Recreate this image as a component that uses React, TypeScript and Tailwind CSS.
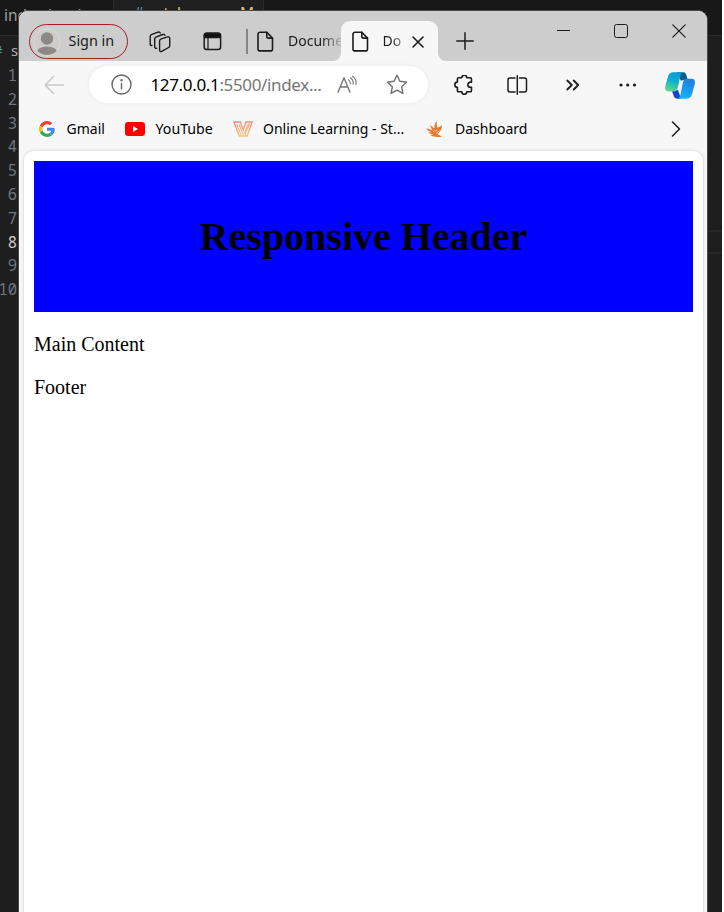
import React from "react";

const ui = "font-['Noto_Sans','Open_Sans',sans-serif] whitespace-nowrap";

type IconProps = { w: number; h: number; className?: string; stroke?: string; sw?: number; children: React.ReactNode };

function Icon({ w, h, className = "", stroke = "#1b1b1b", sw = 1.5, children }: IconProps) {
  return (
    <svg
      width={w}
      height={h}
      viewBox={`0 0 ${w} ${h}`}
      className={`block shrink-0 ${className}`}
      fill="none"
      stroke={stroke}
      strokeWidth={sw}
      strokeLinecap="round"
      strokeLinejoin="round"
    >
      {children}
    </svg>
  );
}

function PageIcon({ className = "" }: { className?: string }) {
  return (
    <Icon w={17} h={21} className={className} sw={1.6}>
      <path d="M3 1.2h6.8l5.7 5.9v10.8a2 2 0 0 1-2 2H3a2 2 0 0 1-2-2V3.2a2 2 0 0 1 2-2Z" />
      <path d="M9.8 1.4v4.1a1.6 1.6 0 0 0 1.6 1.6h4" />
    </Icon>
  );
}

function Editor() {
  const lines = ["1", "2", "3", "4", "5", "6", "7", "8", "9", "10"];
  return (
    <div className="h-full w-[722px] overflow-hidden bg-[#1e1e1e]">
      <div className={`flex h-[36px] border-b border-[#2b2b2b] bg-[#181818] text-[15.5px] leading-[30px] ${ui}`}>
        <div className="w-[114px] shrink-0 border-r border-[#2b2b2b] pl-[4px] text-[#9d9d9d]">index.html</div>
        <div className="flex w-[150px] shrink-0 border-r border-[#2b2b2b] bg-[#1f1f1f] pl-5 leading-[26px] text-[#e2c08d]">
          <span className="w-[22px] text-[#519aba]">#</span>
          <span className="w-[84px]">style.css</span>
          <span>M</span>
        </div>
      </div>
      <div className={`flex h-[28px] items-center text-[15px] text-[#a9a9a9] ${ui}`}>
        <span className="-ml-[7px] w-[18px] text-[#519aba]">#</span>
        <span>style.css</span>
      </div>
      <div className="flex justify-between">
        <div className="flex w-[17px] flex-col items-end font-['Noto_Sans_Mono','DejaVu_Sans_Mono',monospace] text-[15.5px] text-[#6e7681]">
          {lines.map((n) => (
            <div key={n} className={n === "8" ? "h-[23.8px] leading-[23.8px] text-[#cccccc]" : "h-[23.8px] leading-[23.8px]"}>
              {n}
            </div>
          ))}
        </div>
        <div className="mt-[166px] h-[24px] w-[14px] border-y-2 border-[#282828]" />
      </div>
    </div>
  );
}

function TitleBar() {
  return (
    <div className="flex h-[50px] shrink-0 items-start bg-[#cdcdcd]">
      <div className="ml-[10px] mt-[13px] flex h-[35px] w-[99px] shrink-0 items-center rounded-full border-[1.5px] border-[#a81c22]">
        <svg width="28" height="28" viewBox="0 0 28 28" className="ml-[3px] shrink-0">
          <defs>
            <clipPath id="avatar">
              <circle cx="14" cy="14" r="13" />
            </clipPath>
          </defs>
          <circle cx="14" cy="14" r="13.2" fill="#cfcdcb" stroke="#dddbd9" />
          <g fill="#8b8886" clipPath="url(#avatar)">
            <circle cx="14" cy="10.5" r="6.2" />
            <ellipse cx="14" cy="25" rx="10.5" ry="6.6" />
          </g>
        </svg>
        <span className={`-mt-px ml-[7.5px] text-[14.4px] text-[#1b1b1b] ${ui}`}>Sign in</span>
      </div>
      <Icon w={22} h={22} className="ml-[21px] mt-[20px]" sw={1.4}>
        <path d="m11.7 8.2 6.8-2.3c1.3-.4 2.2.2 2.2 1.5v7.3c0 .8-.4 1.4-1.1 1.8l-6.9 3.9c-1.1.6-2.1 0-2.1-1.2v-9c0-1 .3-1.7 1.1-2Z" />
        <path d="M7.7 17.3c-1.3.2-2-.5-2-1.6V8c0-1 .4-1.6 1.2-1.9l6.8-2.6c1.1-.4 1.9 0 2.2.9" />
        <path d="M3 14.5c-1.2.1-1.8-.5-1.8-1.6V5.6c0-1 .4-1.6 1.2-1.9L9 1.2c1.1-.4 1.9 0 2.2.9" />
      </Icon>
      <Icon w={19} h={19} className="ml-[32px] mt-[21px]" sw={1.5}>
        <rect x="1.2" y="1.2" width="16.4" height="16.4" rx="2.5" />
        <path d="M1.5 3.2A2 2 0 0 1 3.5 1.3h11.8a2 2 0 0 1 2 1.9v2.3H1.5Z" fill="#111" />
        <path d="M5 6v11.4" strokeWidth="1.2" />
      </Icon>
      <div className="ml-[24px] mt-[18px] h-[25px] w-[1.5px] shrink-0 bg-[#858585]" />
      <PageIcon className="ml-[9.5px] mt-[20px]" />
      <div
        className={`ml-[14px] mt-[19px] w-[55px] shrink-0 bg-linear-to-r from-[#1b1b1b] from-60% to-[#c4c4c4] bg-clip-text text-[14px] leading-[21px] text-transparent ${ui}`}
      >
        Docume
      </div>
      <div className="-ml-[10px] mt-[10px] flex h-[40px] w-[113px] shrink-0">
        <svg width="8" height="40" className="shrink-0" viewBox="0 0 8 40">
          <path d="M8 32a8 8 0 0 1-8 8h8Z" fill="#f7f7f7" />
        </svg>
        <div className="flex w-[97px] shrink-0 rounded-t-[9px] bg-[#f7f7f7] pt-[10px]">
          <PageIcon className="ml-[10.5px]" />
          <div
            className={`-mt-px ml-[14px] w-[20px] shrink-0 bg-linear-to-r from-[#1b1b1b] from-40% to-[#a0a0a0] bg-clip-text text-[14px] leading-[21px] text-transparent ${ui}`}
          >
            Do
          </div>
          <Icon w={12} h={12} className="ml-[9.5px] mt-[5px]" sw={1.6}>
            <path d="m1 1 10 10M11 1 1 11" />
          </Icon>
        </div>
        <svg width="8" height="40" className="shrink-0" viewBox="0 0 8 40">
          <path d="M0 32a8 8 0 0 0 8 8H0Z" fill="#f7f7f7" />
        </svg>
      </div>
      <Icon w={18} h={18} className="ml-[10px] mt-[21px]">
        <path d="M9 .8v16.4M.8 9h16.4" />
      </Icon>
      <div className="ml-[83px] mt-[19px] h-px w-[13px] shrink-0 bg-[#1b1b1b]" />
      <div className="ml-[44px] mt-[13px] h-[14px] w-[14px] shrink-0 rounded-[2.5px] border-[1.3px] border-[#1b1b1b]" />
      <Icon w={14} h={14} className="ml-[43.5px] mt-[13px]" sw={1.2}>
        <path d="m.8.8 12.4 12.4M13.2.8.8 13.2" />
      </Icon>
    </div>
  );
}

function Toolbar() {
  return (
    <div className="flex h-[47px] shrink-0 items-center">
      <Icon w={21} h={20} className="ml-[25px]" stroke="#c9c9c9" sw={1.5}>
        <path d="M19.5 10H1M9.5 1.5 1 10l8.5 8.5" />
      </Icon>
      <div className="ml-[24px] flex h-[37px] w-[339px] shrink-0 items-center rounded-full bg-white shadow-[0_0_5px_rgba(0,0,0,0.06)]">
        <Icon w={21} h={21} className="ml-[22px]" stroke="#666" sw={1.4}>
          <circle cx="10.5" cy="10.5" r="9.5" />
          <path d="M10.5 9.5v5.4" />
          <circle cx="10.5" cy="6.2" r=".5" fill="#666" />
        </Icon>
        <div className={`ml-[18.5px] w-[186.5px] shrink-0 text-[17px] tracking-[-0.35px] text-[#767676] ${ui}`}>
          <span className="text-black">127.0.0.1</span>:5500/index...
        </div>
        <Icon w={21} h={20} stroke="#767676" sw={1.4}>
          <path d="m1 17.2 6-14.4 6 14.4M3.2 12h7.6" />
          <path d="M11.4 4.6c1.5 1.1 2.1 2.5 1.9 4.3M13.5 2.8c2.2 1.6 3 3.7 2.7 6.5M15.5 1c2.9 2.2 4.1 5.1 3.5 8.7" strokeWidth="1.1" />
        </Icon>
        <Icon w={22} h={21} className="ml-[28px]" stroke="#6f6f6f" sw={1.4}>
          <path d="m11 1.3 2.9 6 6.7.9-4.9 4.6 1.2 6.6-5.9-3.2-5.9 3.2 1.2-6.6L1.4 8.2l6.7-.9Z" />
        </Icon>
      </div>
      <Icon w={20} h={20} className="ml-[25.5px]" sw={1.6}>
        <path d="M4.7 2.8h3.1a2.5 2.5 0 0 1 5 0h3.4c.9 0 1.3.5 1.3 1.3v3h-1a2.6 2.6 0 0 0 0 5.2h1v3.1c0 .9-.5 1.4-1.3 1.4h-3.4a2.5 2.5 0 0 1-5 0H4.7c-.8 0-1.3-.5-1.3-1.4v-3.1a2.6 2.6 0 0 1 0-5.2v-3c0-.8.5-1.3 1.3-1.3Z" />
      </Icon>
      <Icon w={21} h={20} className="ml-[33px]">
        <path d="M8 3H3a2 2 0 0 0-2 2v10a2 2 0 0 0 2 2h5M12.5 3h5a2 2 0 0 1 2 2v10a2 2 0 0 1-2 2h-5M10.3.8v18.4" />
      </Icon>
      <Icon w={14} h={12} className="ml-[38.5px]" sw={1.8}>
        <path d="m1.3 1.5 4.5 4.5-4.5 4.5M7.7 1.5l4.5 4.5-4.5 4.5" />
      </Icon>
      <svg width="18" height="4" className="ml-[39px] shrink-0" fill="#1b1b1b">
        <circle cx="2" cy="2" r="1.6" />
        <circle cx="8.7" cy="2" r="1.6" />
        <circle cx="15.5" cy="2" r="1.6" />
      </svg>
      <svg width="30" height="27" viewBox="0 0 30 27" className="ml-[27.5px] mt-px shrink-0">
        <defs>
          <linearGradient id="copilotLeft" x1=".6" y1="0" x2=".3" y2="1">
            <stop offset="0" stopColor="#079bd9" />
            <stop offset=".45" stopColor="#0bb0cf" />
            <stop offset="1" stopColor="#64dc83" />
          </linearGradient>
          <linearGradient id="copilotRight" x1=".8" y1="0" x2=".4" y2="1">
            <stop offset="0" stopColor="#2479dd" />
            <stop offset="1" stopColor="#11b5fb" />
          </linearGradient>
        </defs>
        <path d="M12 .3h6.5c2 0 2.8 2 3.5 5l.4 1.6-6.6 1.8Z" fill="#0a5e8c" />
        <path d="m7 19 6-1 3 8.7h-3c-2.9 0-4-1.5-4.7-4Z" fill="#1842d6" />
        <path d="M8.4.3h9.2c-1.5.5-2 2.3-2.5 4.7l-2.3 10.5c-.7 2.7-2 4-4.2 4H3.5C.4 19.5-.3 17.5.3 14L3 4.5C4 1.5 5.5.3 8.4.3Z" fill="url(#copilotLeft)" />
        <path d="M21.5 6.8h5.2c2.8 0 3.6 2 3.1 5l-2.7 10.3c-1 3.2-2.6 4.6-5.5 4.6h-8.9c1.5-.5 2.2-2 2.9-4.5L17.8 11c.7-3 1.6-4.2 3.7-4.2Z" fill="url(#copilotRight)" />
      </svg>
    </div>
  );
}

function Bookmarks() {
  const label = `text-[14px] leading-[20px] text-black ${ui}`;
  return (
    <div className="flex h-[43px] shrink-0 items-center pb-px">
      <div className="ml-[19px] flex h-[18px] w-[18px] shrink-0 items-center justify-center rounded-full bg-white">
        <svg width="16" height="16" viewBox="0 0 48 48">
          <path fill="#ea4335" d="M24 9.5c3.5 0 6.7 1.2 9.2 3.6l6.9-6.9C35.9 2.4 30.5 0 24 0 14.6 0 6.5 5.4 2.6 13.2l8 6.2C12.4 13.7 17.7 9.5 24 9.5Z" />
          <path fill="#4285f4" d="M47 24.6c0-1.6-.2-3.1-.4-4.6H24v9h12.9c-.6 3-2.2 5.5-4.7 7.2l7.7 6C44.4 38 47 31.9 47 24.6Z" />
          <path fill="#fbbc05" d="M10.5 28.6a14.5 14.5 0 0 1 0-9.2l-8-6.2a24 24 0 0 0 0 21.6Z" />
          <path fill="#34a853" d="M24 48c6.5 0 11.9-2.1 15.9-5.8l-7.7-6c-2.2 1.5-4.9 2.3-8.2 2.3-6.3 0-11.6-4.2-13.5-9.9l-8 6.2C6.5 42.6 14.6 48 24 48Z" />
        </svg>
      </div>
      <div className={`ml-[10.5px] w-[48.5px] shrink-0 ${label}`}>Gmail</div>
      <svg width="20" height="14" viewBox="0 0 20 14" className="ml-[10px] shrink-0">
        <rect width="20" height="14" rx="3.2" fill="#f00" />
        <path d="m8 4 5 3-5 3Z" fill="#fff" />
      </svg>
      <div className={`ml-[10.5px] w-[67.5px] shrink-0 text-[14.2px] leading-[20px] text-black ${ui}`}>YouTube</div>
      <svg width="20" height="16" viewBox="0 0 20 16" className="ml-[10px] shrink-0" fill="none" stroke="url(#vGradient)" strokeWidth="1.3">
        <defs>
          <linearGradient id="vGradient" x1="0" y1="0" x2="0" y2="16" gradientUnits="userSpaceOnUse">
            <stop offset="0" stopColor="#f08a78" />
            <stop offset="1" stopColor="#f7c56e" />
          </linearGradient>
        </defs>
        <path d="M.9 1h6.5l2.8 8L13 1h6.1l-4.9 14H6.3Z" />
        <path d="m3.6 3.2 4.4 11M6 3.2l3.7 9.5h1.4L15.3 3h1.2l-4.6 11" strokeWidth="1" />
      </svg>
      <div className={`ml-[10px] w-[154px] shrink-0 ${label}`}>Online Learning - St...</div>
      <svg width="17" height="17" viewBox="0 0 17 17" className="ml-[8.5px] shrink-0" fill="#e8782c">
        <path d="M0 7.4c2.7.2 4.8.9 6.6 2C5.3 7.8 4.6 6 4.5 4c1.3 1.6 2.6 2.6 4 3.1C8.3 4.3 9 1.8 10.8 0c-.3 2.3-.2 4.4.3 6.6 1.8-.3 3.4-1 4.9-2.3-.2 3.8-1.7 6.7-4.5 8.6 1 1 2.5 1.8 4.5 2.3-1.5.7-3 .9-4.4.8-2.8-.2-5.2-.4-7.6-1.9 1.3.1 2.5-.1 3.6-.6-2.4-.1-4.2-1-5.4-2.6 1.4.3 2.6.3 3.5 0C3.2 10.4 1.2 9.2 0 7.4Z" />
        <path d="m6.9 10.4 4.4-1.1M10 12.6l3.5-3" stroke="#f7f7f7" strokeWidth=".6" fill="none" />
      </svg>
      <div className={`ml-[12.5px] w-[205px] shrink-0 ${label}`}>Dashboard</div>
      <Icon w={10} h={16} className="ml-[11px]" sw={1.5}>
        <path d="m1.5 1 7 7-7 7" />
      </Icon>
    </div>
  );
}

export default function App() {
  return (
    <div className="relative h-[912px] w-[724px] overflow-hidden bg-white">
      <Editor />
      <div className="absolute left-[18px] top-[10px] flex h-[910px] w-[690px] flex-col overflow-hidden rounded-t-[10px] border border-[#484848] bg-[#f7f7f7]">
        <TitleBar />
        <Toolbar />
        <Bookmarks />
        <div className="ml-[5px] mr-[4px] flex-1 rounded-t-[9px] bg-white px-[10px] pt-[10px] font-['Liberation_Serif',serif] text-[20px] leading-[23px] text-black shadow-[0_0_3px_rgba(0,0,0,0.2)]">
          <header className="flex h-[151px] items-center justify-center bg-[#0000ff]">
            <h1 className="text-[40px] font-bold leading-[46px]">Responsive Header</h1>
          </header>
          <p className="mt-[21px]">Main Content</p>
          <p className="mt-[20px]">Footer</p>
        </div>
      </div>
    </div>
  );
}
